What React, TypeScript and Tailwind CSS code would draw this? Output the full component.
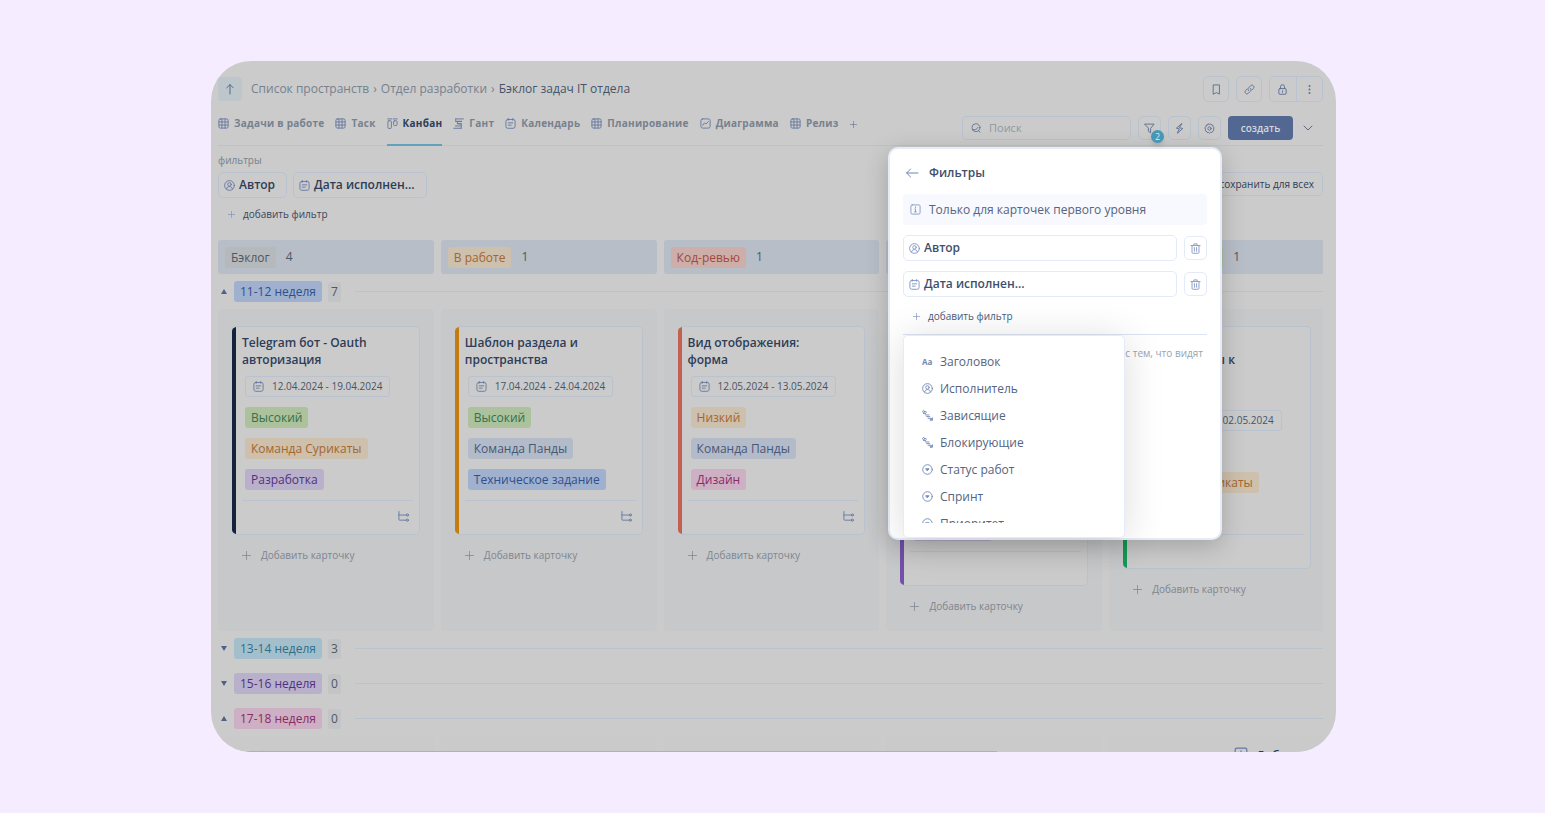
import type { ReactNode } from "react";

type Tone = "gray" | "amber" | "coral" | "blue" | "green" | "violet" | "slate" | "pink" | "cyan";

const tones: Record<Tone, string> = {
  gray: "bg-[#b5b9bb] text-[#4c5865]",
  amber: "bg-[#cdc0ac] text-[#a5652f]",
  coral: "bg-[#cdaea9] text-[#a04a3b]",
  blue: "bg-[#a0b0cf] text-[#2f5089]",
  green: "bg-[#abc29d] text-[#35704a]",
  violet: "bg-[#b9b0cc] text-[#50327c]",
  slate: "bg-[#b4bbc8] text-[#465877]",
  pink: "bg-[#cdb0c3] text-[#8a2a66]",
  cyan: "bg-[#a4bfcc] text-[#2c6f8c]",
};

interface TagData {
  text: string;
  tone: Tone;
}

interface CardData {
  title: string;
  date: string;
  bar: string;
  tags: TagData[];
  subtasks?: boolean;
}

const tabs = [
  { name: "Задачи в работе", icon: "grid" },
  { name: "Таск", icon: "grid" },
  { name: "Канбан", icon: "kanban", active: true },
  { name: "Гант", icon: "gantt" },
  { name: "Календарь", icon: "calendar" },
  { name: "Планирование", icon: "grid" },
  { name: "Диаграмма", icon: "chart" },
  { name: "Релиз", icon: "grid" },
];

const columns: { name: string; tone: Tone; count: number }[] = [
  { name: "Бэклог", tone: "gray", count: 4 },
  { name: "В работе", tone: "amber", count: 1 },
  { name: "Код-ревью", tone: "coral", count: 1 },
  { name: "Тестирование", tone: "violet", count: 1 },
  { name: "К тестированию", tone: "green", count: 1 },
];

const cards: CardData[] = [
  {
    title: "Telegram бот - Oauth\nавторизация",
    date: "12.04.2024 - 19.04.2024",
    bar: "bg-[#14233d]",
    subtasks: true,
    tags: [
      { text: "Высокий", tone: "green" },
      { text: "Команда Сурикаты", tone: "amber" },
      { text: "Разработка", tone: "violet" },
    ],
  },
  {
    title: "Шаблон раздела и\nпространства",
    date: "17.04.2024 - 24.04.2024",
    bar: "bg-[#c57c0e]",
    subtasks: true,
    tags: [
      { text: "Высокий", tone: "green" },
      { text: "Команда Панды", tone: "slate" },
      { text: "Техническое задание", tone: "blue" },
    ],
  },
  {
    title: "Вид отображения:\nформа",
    date: "12.05.2024 - 13.05.2024",
    bar: "bg-[#c4604f]",
    subtasks: true,
    tags: [
      { text: "Низкий", tone: "amber" },
      { text: "Команда Панды", tone: "slate" },
      { text: "Дизайн", tone: "pink" },
    ],
  },
  {
    title: "Форма\nзаявки\nна новый\nотчёт\nотдела",
    date: "22.04.2024 - 29.04.2024",
    bar: "bg-[#7450ac]",
    tags: [
      { text: "Средний", tone: "amber" },
      { text: "Команда Панды", tone: "slate" },
      { text: "Разработка", tone: "violet" },
    ],
  },
  {
    title: "Новые\nдоступы, тесты к\nзадачам\nотдела",
    date: "25.04.2024 - 02.05.2024",
    bar: "bg-[#159b57]",
    tags: [
      { text: "Низкий", tone: "amber" },
      { text: "Команда Сурикаты", tone: "amber" },
      { text: "Дизайн", tone: "pink" },
    ],
  },
];

const options = [
  { name: "Заголовок", icon: "text" },
  { name: "Исполнитель", icon: "user" },
  { name: "Зависящие", icon: "relation" },
  { name: "Блокирующие", icon: "relation" },
  { name: "Статус работ", icon: "select" },
  { name: "Спринт", icon: "select" },
  { name: "Приоритет", icon: "select" },
];

// All glyphs are drawn on a 12x12 grid
const glyphs: Record<string, ReactNode> = {
  grid: (
    <>
      <rect x="1" y="1" width="10" height="10" rx="1.5" />
      <path d="M1 4.3h10M1 7.7h10M4.3 1v10M7.7 1v10" />
    </>
  ),
  kanban: (
    <>
      <path d="M.8 1h4.4M6.8 1h4.4" />
      <rect x="1" y="3" width="3.8" height="8.4" rx="1" />
      <rect x="7.2" y="3" width="3.8" height="5.2" rx="1" />
    </>
  ),
  gantt: <path d="M3 1h8.4M3 3.7h6.4M3 1v2.7M9.4 3.7H4.8v2.6h4.6M4.8 6.3H9v2.4H2.6M9 8.7v2.5M.8 11.2H9" />,
  calendar: (
    <>
      <rect x="1" y="1.6" width="10" height="9.6" rx="2" />
      <path d="M3.6.6v1.8M8.4.6v1.8M3.6 5.3h4.8M3.6 7.8h3.2" />
    </>
  ),
  chart: (
    <>
      <rect x="1" y="1" width="10" height="10" rx="1.8" />
      <path d="M3 8l1.8-2.6 1.7 1.2L9 4" />
    </>
  ),
  user: (
    <>
      <circle cx="6" cy="6" r="5.3" />
      <circle cx="6" cy="4.8" r="1.9" />
      <path d="M2.8 9.8c.3-1.8 1.6-2.6 3.2-2.6s2.9.8 3.2 2.6" />
    </>
  ),
  relation: (
    <>
      <circle cx="1.8" cy="1.8" r="1.1" />
      <path d="M1.6 3.8h2.4M3.6 1.8l1.4.6M3.6 5.4h4M5 7.200h3.400M6.600 9h1.800M9 11.200h2.400V8.600" />
      <circle cx="9.600" cy="9.800" r=".9" />
    </>
  ),
  select: (
    <>
      <circle cx="6" cy="6" r="5.2" />
      <path d="M4.3 5.2h3.4L6 7.2z" fill="currentColor" />
    </>
  ),
  up: <path d="M6 11V1.6M2.8 4.8L6 1.6l3.2 3.2" />,
  back: <path d="M12 6H.6M4.6 2L.6 6l4 4" />,
  plus: <path d="M6 .6v10.8M.6 6h10.8" />,
  bookmark: <path d="M2.8 1h6.4v10L6 9.4 2.8 11z" />,
  link: (
    <path d="M5 7.2c-.9-.9-.9-2.1 0-3l2.2-2.3c.9-.9 2.1-.9 3 0s.9 2.1 0 3L8.8 6.4M7 4.8c.9.9.9 2.1 0 3l-2.2 2.3c-.9.9-2.1.9-3 0s-.9-2.1 0-3l1.4-1.5" />
  ),
  lock: (
    <>
      <rect x="2" y="5" width="8" height="6.2" rx="1.2" />
      <path d="M3.8 5V3a2.2 2.2 0 0 1 4.4 0v2M6 7.4v1.6" />
    </>
  ),
  dots: (
    <g fill="currentColor" stroke="none">
      <circle cx="6" cy="1.4" r="1.3" />
      <circle cx="6" cy="6" r="1.3" />
      <circle cx="6" cy="10.6" r="1.3" />
    </g>
  ),
  search: (
    <>
      <circle cx="6" cy="5.6" r="4.8" />
      <path d="M8.8 8.8l2 2.4M2 8c2.600.8 5.400-.4 6.400-2.800" />
    </>
  ),
  funnel: <path d="M1 1.2h10L7.2 6v4.8L4.8 9V6z" />,
  bolt: <path d="M8.4.8L2.600 5.600l3.200.8L3.600 11.200l6-5.200-3.400-.8z" />,
  gear: (
    <>
      <path d="M4.700 1L6 1.600 7.300 1l1 1.200 1.500.3.1 1.600L11 5.300l-.6 1.400.3 1.500-1.400.8-.7 1.400-1.500-.1L6 11.200l-1.100-.9-1.500.1L2.700 9l-1.400-.8.3-1.500L1 5.300l1.100-1.200.1-1.600 1.500-.3z" />
      <circle cx="6" cy="6" r="1.800" />
    </>
  ),
  down: <path d="M2 4l4 4 4-4" />,
  info: (
    <>
      <rect x="1" y="1" width="10" height="10" rx="1.4" />
      <path d="M5.2 5.4H6v3M5 8.6h2M6 3.2v.8" />
    </>
  ),
  trash: (
    <path d="M1 2.8h10M4.2 2.6V1h3.6v1.6M2.2 2.8v7.4c0 .6.4 1 1 1h5.6c.6 0 1-.4 1-1V2.8M4.8 5v4M7.2 5v4" />
  ),
  tree: (
    <>
      <path d="M1 .6v8.8c0 .4.2.6.6.6h7.4M1 4.4h8" />
      <circle cx="10.2" cy="4.4" r="1.2" />
      <circle cx="10.2" cy="10" r="1.2" />
    </>
  ),
};

function Icon({ name, className = "size-3" }: { name: string; className?: string }) {
  if (name === "text") {
    return <span className="w-[11px] text-[8px] leading-3 font-bold">Aa</span>;
  }
  return (
    <svg
      viewBox="0 0 12 12"
      fill="none"
      stroke="currentColor"
      strokeWidth="1"
      strokeLinecap="round"
      strokeLinejoin="round"
      className={`shrink-0 overflow-visible ${className}`}
      aria-hidden="true"
    >
      {glyphs[name]}
    </svg>
  );
}

function Tag({ text, tone }: TagData) {
  return <span className={`rounded-[3px] px-[6px] text-[12px] leading-[21px] whitespace-nowrap ${tones[tone]}`}>{text}</span>;
}

function SquareButton({ icon, label, className }: { icon: string; label: string; className: string }) {
  return (
    <button
      aria-label={label}
      className={`flex items-center justify-center rounded-[5px] border border-[#b9c2cf] text-[#5b6d92] ${className}`}
    >
      <Icon name={icon} className="size-[11px]" />
    </button>
  );
}

function Header() {
  return (
    <header className="flex items-center">
      <button aria-label="Наверх" className="flex size-6 items-center justify-center rounded-[4px] bg-[#bcc6cb] text-[#56698f]">
        <Icon name="up" />
      </button>
      <nav className="ml-[9px] flex gap-1 text-[12px] leading-[26px] text-[#76818e]">
        <a href="#spaces">Список пространств</a>
        <span>›</span>
        <a href="#dev">Отдел разработки</a>
        <span>›</span>
        <a href="#backlog" className="text-[#46546a]">Бэклог задач IT отдела</a>
      </nav>
      <div className="ml-auto flex gap-[7px]">
        <SquareButton icon="bookmark" label="В закладки" className="size-[26px]" />
        <SquareButton icon="link" label="Ссылка" className="size-[26px]" />
        <div className="flex h-[26px] w-[54px] rounded-[5px] border border-[#b9c2cf] text-[#5b6d92]">
          <button aria-label="Доступ" className="flex flex-1 items-center justify-center border-r border-[#b9c2cf]">
            <Icon name="lock" className="size-[11px]" />
          </button>
          <button aria-label="Меню" className="flex flex-1 items-center justify-center">
            <Icon name="dots" className="size-[9px]" />
          </button>
        </div>
      </div>
    </header>
  );
}

function Toolbar() {
  return (
    <div className="flex h-11 items-start border-b border-[#b9c2cf]">
      <nav className="flex h-11 gap-[11px] text-[10px] font-bold tracking-wide text-[#76818e]">
        {tabs.map((tab) => (
          <a
            key={tab.name}
            href="#tab"
            className={`flex items-start gap-[5px] border-b-2 pt-3 leading-[18px] whitespace-nowrap ${
              tab.active ? "border-[#62a0bc] text-[#2d3d57]" : "border-transparent"
            }`}
          >
            <Icon name={tab.icon} className="mt-[4px] size-[11px] text-[#6577a0]" />
            {tab.name}
          </a>
        ))}
        <button aria-label="Добавить вид" className="mt-[18px] h-2 text-[#5b6d92]">
          <Icon name="plus" className="size-[7px]" />
        </button>
      </nav>
      <div className="mt-[14px] ml-auto flex gap-[7px]">
        <label className="flex h-6 w-[169px] items-center gap-2 rounded-[4px] border border-[#b9c2cf] px-2 text-[#5b6d92]">
          <Icon name="search" className="size-[10px]" />
          <input
            type="search"
            placeholder="Поиск"
            aria-label="Поиск"
            className="w-full bg-transparent text-[11px] outline-none placeholder:text-[#8f9a9f]"
          />
        </label>
        <div className="relative">
          <SquareButton icon="funnel" label="Фильтры" className="h-6 w-[23px]" />
          <span className="absolute -right-[3px] -bottom-[3px] z-10 size-[13px] rounded-full bg-[#4697b6] text-center text-[9px] leading-[13px] text-[#d8e6ec] shadow-md">
            2
          </span>
        </div>
        <SquareButton icon="bolt" label="Автоматизация" className="h-6 w-[23px]" />
        <SquareButton icon="gear" label="Настройки" className="h-6 w-[23px]" />
        <button className="h-6 w-[65px] rounded-[4px] bg-[#526791] text-[10px] font-semibold text-[#d3d7df]">создать</button>
        <button aria-label="Ещё" className="flex w-[23px] items-center justify-center pr-2 text-[#56698f]">
          <Icon name="down" />
        </button>
      </div>
    </div>
  );
}

function AddFilter({ className }: { className: string }) {
  return (
    <button className={`flex items-center gap-2 text-[10px] leading-4 ${className}`}>
      <Icon name="plus" className="size-[7px] text-[#7489b5]" />
      добавить фильтр
    </button>
  );
}

function Filters() {
  return (
    <section>
      <div className="mt-[6px] text-[10px] leading-4 text-[#76818e]">фильтры</div>
      <div className="mt-1 flex items-start gap-[6px] text-[12px] font-semibold text-[#2d3d57]">
        <button className="flex h-[26px] w-[69px] items-center gap-1 rounded-[5px] border border-[#b9c2cf] pl-[5px]">
          <Icon name="user" className="size-[11px] text-[#6577a0]" />
          Автор
        </button>
        <button className="flex h-[26px] w-[134px] items-center gap-1 rounded-[5px] border border-[#b9c2cf] pl-[5px]">
          <Icon name="calendar" className="size-[11px] text-[#6577a0]" />
          Дата исполнен...
        </button>
        <button className="ml-auto h-6 rounded-[4px] border border-[#b9c2cf] px-2 text-[10px] font-normal">сохранить для всех</button>
      </div>
      <AddFilter className="mt-2 ml-[10px] text-[#37465d]" />
    </section>
  );
}

function GroupRow({ text, tone, count, open }: TagData & { count: number; open?: boolean }) {
  return (
    <div className="flex h-[35px] items-center">
      <button aria-label={text} className="mr-1 flex w-3 justify-center text-[#4d618b]">
        <svg viewBox="0 0 6 5" className="h-[5px] w-[6px]" fill="currentColor" aria-hidden="true">
          <path d={open ? "M3 0l3 5H0z" : "M0 0h6L3 5z"} />
        </svg>
      </button>
      <Tag text={text} tone={tone} />
      <span className="ml-[6px] rounded-[3px] bg-[#c3c4c5] px-[3px] text-[12px] leading-5 text-[#4c5865]">{count}</span>
      <hr className="ml-[14px] flex-1 border-[#b9c2cf]" />
    </div>
  );
}

function Card({ title, date, bar, tags, subtasks }: CardData) {
  return (
    <article className="flex overflow-hidden rounded-[5px] border border-l-0 border-[#b9c2cf] bg-[#cbcbcb]">
      <div className={`w-1 shrink-0 ${bar}`} />
      <div className="flex flex-1 flex-col items-start px-[6px] pt-[7px]">
        <h3 className="text-[12px] leading-[17px] font-semibold whitespace-pre-line text-[#2d3d57]">{title}</h3>
        <div className="mt-2 ml-[3px] flex h-[21px] items-center gap-2 rounded-[3px] border border-[#b9c2cf] px-[7px] text-[10px] whitespace-nowrap text-[#46546a]">
          <Icon name="calendar" className="size-[11px] text-[#6577a0]" />
          {date}
        </div>
        <div className="mt-[10px] ml-[3px] flex flex-col items-start gap-[10px]">
          {tags.map((tag) => (
            <Tag key={tag.text} {...tag} />
          ))}
        </div>
        <div className="mt-[10px] flex h-[34px] w-full justify-end border-t border-[#b9c2cf] pt-[10px] pr-1 text-[#6577a0]">
          {subtasks && <Icon name="tree" className="size-[11px]" />}
        </div>
      </div>
    </article>
  );
}

function Board() {
  return (
    <main className="mt-[18px] overflow-x-clip">
      <div className="-mr-[2px] grid grid-cols-5 gap-[7px]">
        {columns.map((column) => (
          <div
            key={column.name}
            className="flex h-[34px] items-center gap-[10px] rounded-[3px] bg-[#b8bec8] px-[7px] text-[12px] text-[#4c5865]"
          >
            <Tag text={column.name} tone={column.tone} />
            {column.count}
          </div>
        ))}
      </div>
      <GroupRow text="11-12 неделя" tone="blue" count={7} open />
      <div className="-mr-[2px] grid grid-cols-5 gap-[7px]">
        {cards.map((card) => (
          <div key={card.date} className="rounded-[4px] bg-[#c7c8c9] px-[14px] pt-[17px] pb-4">
            <Card {...card} />
            <button className="mt-[11px] ml-[10px] flex items-center gap-[10px] text-[10px] leading-[18px] text-[#7d858f]">
              <Icon name="plus" className="size-[9px]" />
              Добавить карточку
            </button>
          </div>
        ))}
      </div>
      <GroupRow text="13-14 неделя" tone="cyan" count={3} />
      <GroupRow text="15-16 неделя" tone="violet" count={0} />
      <GroupRow text="17-18 неделя" tone="pink" count={0} open />
      <div className="-mr-[2px] grid grid-cols-5 gap-[7px] text-[12px] leading-[17px] font-semibold text-[#2d3d57]">
        <div className="rounded-[4px] bg-[#cacaca] px-6 pt-3">Заблокировано</div>
        <div className="rounded-[4px] bg-[#cacaca]" />
        <div className="rounded-[4px] bg-[#cacaca]" />
        <div className="rounded-[4px] bg-[#cacaca]" />
        <div className="flex justify-end gap-2 rounded-[4px] bg-[#cacaca] pt-[11px] pr-[10px]">
          <Icon name="info" className="size-[14px] text-[#6577a0]" />
          Добавить
        </div>
      </div>
    </main>
  );
}

function FilterField({ icon, text }: { icon: string; text: string }) {
  return (
    <div className="mt-[10px] flex items-center gap-[7px]">
      <button className="flex h-[26px] flex-1 items-center gap-1 rounded-[5px] border border-[#e3eaf8] pl-[5px] text-[12px] font-semibold text-[#3d4f6f]">
        <Icon name={icon} className="size-[11px] text-[#7d93c4]" />
        {text}
      </button>
      <button aria-label="Удалить" className="flex h-6 w-[23px] items-center justify-center rounded-[5px] border border-[#e3eaf8] text-[#8599c4]">
        <Icon name="trash" className="size-[11px]" />
      </button>
    </div>
  );
}

function FilterPanel() {
  return (
    <aside className="absolute top-[86px] right-[114px] h-[393px] w-[334px] rounded-[10px] border-2 border-[#e6ecf7] bg-white px-[13px] pt-[15px] shadow-[0_6px_24px_rgba(0,0,0,0.2)]">
      <div className="flex items-center gap-[11px] pl-[3px] text-[12px] leading-[18px] font-semibold text-[#3d4f6f]">
        <button aria-label="Назад" className="text-[#6f86ba]">
          <Icon name="back" />
        </button>
        <h2>Фильтры</h2>
      </div>
      <p className="mt-3 flex h-[31px] items-center gap-2 rounded-[3px] bg-[#f7f9fe] pl-[7px] text-[12px] text-[#55647f]">
        <Icon name="info" className="size-[11px] text-[#8599c4]" />
        Только для карточек первого уровня
      </p>
      <FilterField icon="user" text="Автор" />
      <FilterField icon="calendar" text="Дата исполнен..." />
      <AddFilter className="mt-[11px] ml-[10px] text-[#4b5b78]" />
      <div className="mt-[10px] border-t border-[#dbe4f3] pt-[10px] pr-1 text-right text-[10px] leading-4 text-[#9aa3b1]">
        с тем, что видят
      </div>
      <div className="absolute top-[186px] left-[13px] h-[203px] w-[222px] rounded-[5px] border border-[#e6ecf7] bg-white pt-3 shadow-[0_4px_40px_rgba(0,0,0,0.14)]">
        <ul className="h-[175px] overflow-hidden pl-[18px] text-[12px] leading-[27px]">
          {options.map((option) => (
            <li key={option.name} className="flex items-center gap-[7px] text-[#7489b5]">
              <Icon name={option.icon} className="size-[11px]" />
              <button className="text-[#55647f]">{option.name}</button>
            </li>
          ))}
        </ul>
      </div>
    </aside>
  );
}

export default function App() {
  return (
    <div className="flex h-screen bg-[#f5edff] pt-[61px] pr-[209px] pb-[61px] pl-[211px] font-['Open_Sans','Noto_Sans',sans-serif]">
      <div className="relative flex-1 overflow-hidden rounded-[40px] bg-[#cbcbcb] pt-[15px] pr-[13px] pl-[7px]">
        <Header />
        <Toolbar />
        <Filters />
        <Board />
        <div className="absolute bottom-0 left-9 h-px w-2/3 bg-[#a9b2c1]" />
        <FilterPanel />
      </div>
    </div>
  );
}
